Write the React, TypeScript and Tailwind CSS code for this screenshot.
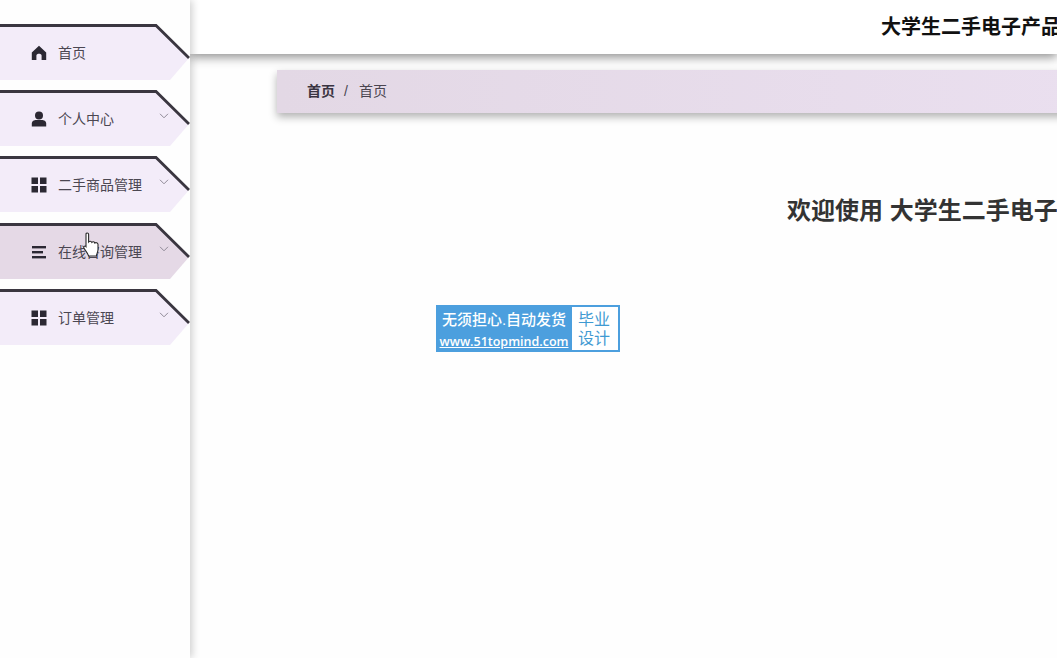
import React from "react";

const Home = () => (
  <svg width="16" height="16" viewBox="0 0 16 16" fill="#2b2833">
    <path d="M8 0.8 L15.2 7.4 V15 H10.6 V10.6 C10.6 8 5.4 8 5.4 10.6 V15 H0.8 V7.4 Z" />
  </svg>
);
const User = () => (
  <svg width="16" height="16" viewBox="0 0 16 16" fill="#2b2833">
    <circle cx="8" cy="4.4" r="4" />
    <path d="M0.8 15.4 V12.6 C0.8 10 3.2 9 5.2 9 H10.8 C12.8 9 15.2 10 15.2 12.6 V15.4 Z" />
  </svg>
);
const Grid = () => (
  <svg width="16" height="16" viewBox="0 0 16 16" fill="#2b2833">
    <rect x="0.5" y="0.5" width="6.5" height="6.5" />
    <rect x="9" y="0.5" width="6.5" height="6.5" />
    <rect x="0.5" y="9" width="6.5" height="6.5" />
    <rect x="9" y="9" width="6.5" height="6.5" />
  </svg>
);
const Lines = () => (
  <svg width="16" height="16" viewBox="0 0 16 16" fill="#2b2833">
    <rect x="1" y="2" width="14" height="2.4" />
    <rect x="1" y="7" width="11" height="2.4" />
    <rect x="1" y="12" width="14" height="2.4" />
  </svg>
);
const Chevron = () => (
  <svg width="10" height="6" viewBox="0 0 10 6" fill="none" stroke="#8f8a96" strokeWidth="1">
    <path d="M1 0.8 L5 4.8 L9 0.8" />
  </svg>
);

const items = [
  { label: "首页", icon: <Home />, arrow: false, active: false },
  { label: "个人中心", icon: <User />, arrow: true, active: false },
  { label: "二手商品管理", icon: <Grid />, arrow: true, active: false },
  { label: "在线咨询管理", icon: <Lines />, arrow: true, active: true },
  { label: "订单管理", icon: <Grid />, arrow: true, active: false },
];

function MenuItem({ label, icon, arrow, active }: { label: string; icon: React.ReactNode; arrow: boolean; active: boolean }) {
  return (
    <div className="relative h-[56.2px] w-[190px] flex items-center pl-[31px] pt-[2px]">
      <svg className="absolute left-0 top-0" width="190" height="56" viewBox="0 0 190 56">
        <path d="M0 1.5 H156 L189 34 L170 56 H0 Z" fill={active ? "#e5d9e6" : "#f3ecf9"} />
        <path d="M0 1.5 H156 L189 34" fill="none" stroke="#3a3640" strokeWidth="2.8" />
      </svg>
      <span className="relative w-[16px] h-[16px] flex">{icon}</span>
      <span className="relative ml-[11px] text-[14px] leading-[20px] text-[#4b4752] mt-[-0.2px]">{label}</span>
      {arrow && (
        <span className="absolute left-[159px] top-[23px] flex">
          <Chevron />
        </span>
      )}
    </div>
  );
}

export default function App() {
  return (
    <div
      className="relative flex h-[658px] w-[1057px] overflow-hidden bg-[#fefefe]"
      style={{ fontFamily: '"Liberation Sans", "Noto Sans CJK SC", sans-serif' }}
    >
      <aside className="relative z-10 w-[190px] h-full shrink-0 bg-[#fefefe] pt-[24px] flex flex-col gap-[10px] shadow-[2px_0_8px_rgba(0,0,0,0.2)]">
        {items.map((it) => (
          <MenuItem key={it.label} {...it} />
        ))}
      </aside>
      <main className="flex-1 min-w-0 flex flex-col">
        <header className="h-[54px] shrink-0 bg-white pl-[691px] flex items-center whitespace-nowrap text-[20px] font-bold text-[#111] shadow-[0_3px_10px_rgba(0,0,0,0.45)] relative">
          大学生二手电子产品交易平台
        </header>
        <div className="mt-[16px] ml-[87px] h-[43px] shrink-0 flex items-center pl-[30px] text-[14px] bg-gradient-to-r from-[#e3d8e5] to-[#eadfef] shadow-[0_4px_8px_rgba(0,0,0,0.3)] -mr-[20px]">
          <span className="font-bold text-[#3a3441]">首页</span>
          <span className="ml-[9px] mr-[11px] text-[#4a4550]">/</span>
          <span className="text-[#4a4550]">首页</span>
        </div>
        <h1 className="mt-[81px] ml-[597px] whitespace-nowrap text-[24px] leading-[34px] font-bold text-[#333]">
          欢迎使用 大学生二手电子产品交易平台
        </h1>
      </main>

      <div className="absolute z-20 left-[436px] top-[305px] w-[184px] h-[47px] bg-[#4c9fde] flex">
        <div className="w-[136px] flex flex-col items-center text-white font-medium">
          <span className="text-[15px] leading-[20px] mt-[5px]">无须担心.自动发货</span>
          <span className="text-[12.5px] font-semibold leading-[17px] underline mt-[3px]" style={{ fontFamily: '"Open Sans", sans-serif' }}>www.51topmind.com</span>
        </div>
        <div className="flex-1 m-[2px] ml-0 bg-white flex flex-col items-center justify-center text-[#3f9ad2] text-[16px] leading-[19px] pr-[2px]">
          <span>毕业</span>
          <span>设计</span>
        </div>
      </div>

      <svg className="absolute z-30 left-[83px] top-[232px]" width="18" height="25" viewBox="0 0 18 25">
        <path
          d="M3 2.2 C3 0.6 5.6 0.6 5.6 2.2 V10 C6.4 9 8.2 9 8.8 10.4 C9.6 9.4 11.4 9.6 11.8 11 C12.8 10.2 14.8 10.6 15 12.2 V17.5 C15 20 13.8 21.6 13.4 24 H5.6 C5 21.6 2.4 18.6 1 16.4 C0.2 14.8 1.8 13.2 3 14.6 Z"
          fill="#fff"
          stroke="#2a2a2a"
          strokeWidth="1.1"
        />
      </svg>
    </div>
  );
}
